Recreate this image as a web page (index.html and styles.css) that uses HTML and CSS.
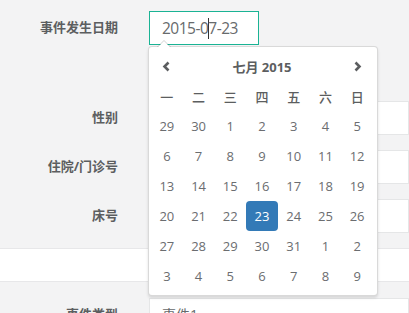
FILE: index.html
```html
<!DOCTYPE html>
<html lang="zh-CN">

<head>
  <meta charset="UTF-8">
  <meta name="viewport" content="width=device-width, initial-scale=1.0">
  <title>事件登记</title>
  <link rel="stylesheet" href="styles.css">
</head>

<body>
  <div class="form">
    <div class="row row-first">
      <label>事件发生日期</label>
      <div class="field">
        <div class="input input-date focus">2015-0<span class="cursor"></span>7-23</div>
        <div class="datepicker">
          <div class="dp-grid">
            <div class="dp-nav">
              <svg width="9" height="11" viewBox="0 0 9 11"><polyline points="6.5,1.5 2.5,5.5 6.5,9.5" /></svg>
            </div>
            <div class="dp-title">七月 2015</div>
            <div class="dp-nav">
              <svg width="9" height="11" viewBox="0 0 9 11"><polyline points="2.5,1.5 6.5,5.5 2.5,9.5" /></svg>
            </div>

            <div class="dow">一</div>
            <div class="dow">二</div>
            <div class="dow">三</div>
            <div class="dow">四</div>
            <div class="dow">五</div>
            <div class="dow">六</div>
            <div class="dow">日</div>

            <div class="day old">29</div><div class="day old">30</div><div class="day">1</div><div class="day">2</div><div class="day">3</div><div class="day">4</div><div class="day">5</div>
            <div class="day">6</div><div class="day">7</div><div class="day">8</div><div class="day">9</div><div class="day">10</div><div class="day">11</div><div class="day">12</div>
            <div class="day">13</div><div class="day">14</div><div class="day">15</div><div class="day">16</div><div class="day">17</div><div class="day">18</div><div class="day">19</div>
            <div class="day">20</div><div class="day">21</div><div class="day">22</div><div class="day active">23</div><div class="day">24</div><div class="day">25</div><div class="day">26</div>
            <div class="day">27</div><div class="day">28</div><div class="day">29</div><div class="day">30</div><div class="day">31</div><div class="day new">1</div><div class="day new">2</div>
            <div class="day new">3</div><div class="day new">4</div><div class="day new">5</div><div class="day new">6</div><div class="day new">7</div><div class="day new">8</div><div class="day new">9</div>
          </div>
        </div>
      </div>
    </div>

    <div class="row">
      <label>性别</label>
      <div class="field"><div class="input"></div></div>
    </div>

    <div class="row">
      <label>住院/门诊号</label>
      <div class="field"><div class="input"></div></div>
    </div>

    <div class="row">
      <label>床号</label>
      <div class="field"><div class="input"></div></div>
    </div>

    <div class="band"></div>

    <div class="row">
      <label>事件类型</label>
      <div class="field"><div class="input">事件1</div></div>
    </div>
  </div>
</body>

</html>
```

FILE: styles.css
```css
* {
  margin: 0;
  padding: 0;
  box-sizing: border-box;
}

body {
  background: #f3f3f4;
  font-family: 'Open Sans', 'Noto Sans CJK SC', sans-serif;
  color: #676a6c;
  overflow: hidden;
}

.form {
  padding-top: 11px;
}

.row {
  display: grid;
  grid-template-columns: 118px 1fr;
  column-gap: 31px;
  align-items: center;
  margin-bottom: 15px;
}

.row-first {
  margin-bottom: 56px;
}

.row label {
  text-align: right;
  font-size: 13px;
  font-weight: bold;
  line-height: 16px;
  margin-top: -2px;
  color: #5c5e60;
}

.field {
  position: relative;
}

.input {
  height: 34px;
  background: white;
  border: 1px solid #e5e6e7;
  padding: 0 12px;
  font-size: 14px;
  line-height: 32px;
  color: #676a6c;
}

.input-date {
  width: 110px;
  font-size: 15.5px;
  letter-spacing: -0.5px;
}

.input.focus {
  border-color: #1ab394;
}

.cursor {
  display: inline-block;
  width: 1px;
  height: 21px;
  background: #333;
  vertical-align: -5px;
  margin-right: -1px;
}

.band {
  height: 34px;
  background: white;
  border-top: 1px solid #e7e7e9;
  border-bottom: 1px solid #e7e7e9;
  margin-bottom: 16px;
}

/* date picker dropdown */
.datepicker {
  position: absolute;
  top: 35px;
  left: -1px;
  width: 230px;
  padding: 4px 4px 4px 2px;
  background: white;
  border: 1px solid rgba(0, 0, 0, 0.15);
  border-radius: 4px;
  box-shadow: 0 2px 3px rgba(0, 0, 0, 0.12);
  z-index: 5;
}

.datepicker::before {
  content: '';
  position: absolute;
  top: -7px;
  left: 8px;
  border-left: 7px solid transparent;
  border-right: 7px solid transparent;
  border-bottom: 7px solid rgba(0, 0, 0, 0.18);
}

.datepicker::after {
  content: '';
  position: absolute;
  top: -6px;
  left: 9px;
  border-left: 6px solid transparent;
  border-right: 6px solid transparent;
  border-bottom: 6px solid white;
}

.dp-grid {
  display: grid;
  grid-template-columns: repeat(7, 1fr);
  grid-auto-rows: 30px;
}

.dp-grid > div {
  display: flex;
  align-items: center;
  justify-content: center;
}

.dp-title {
  grid-column: span 5;
  font-size: 13px;
  font-weight: bold;
  color: #5c5e60;
}

.dp-nav svg polyline {
  fill: none;
  stroke: #5c5e60;
  stroke-width: 2.6;
}

.dow {
  font-family: 'Noto Sans CJK SC', sans-serif;
  font-size: 13px;
  font-weight: 500;
  color: #5c5e60;
}

.day {
  font-size: 13px;
  color: #6b6d70;
}

.day.active {
  background: #337ab7;
  color: white;
  border-radius: 4px;
}
```
